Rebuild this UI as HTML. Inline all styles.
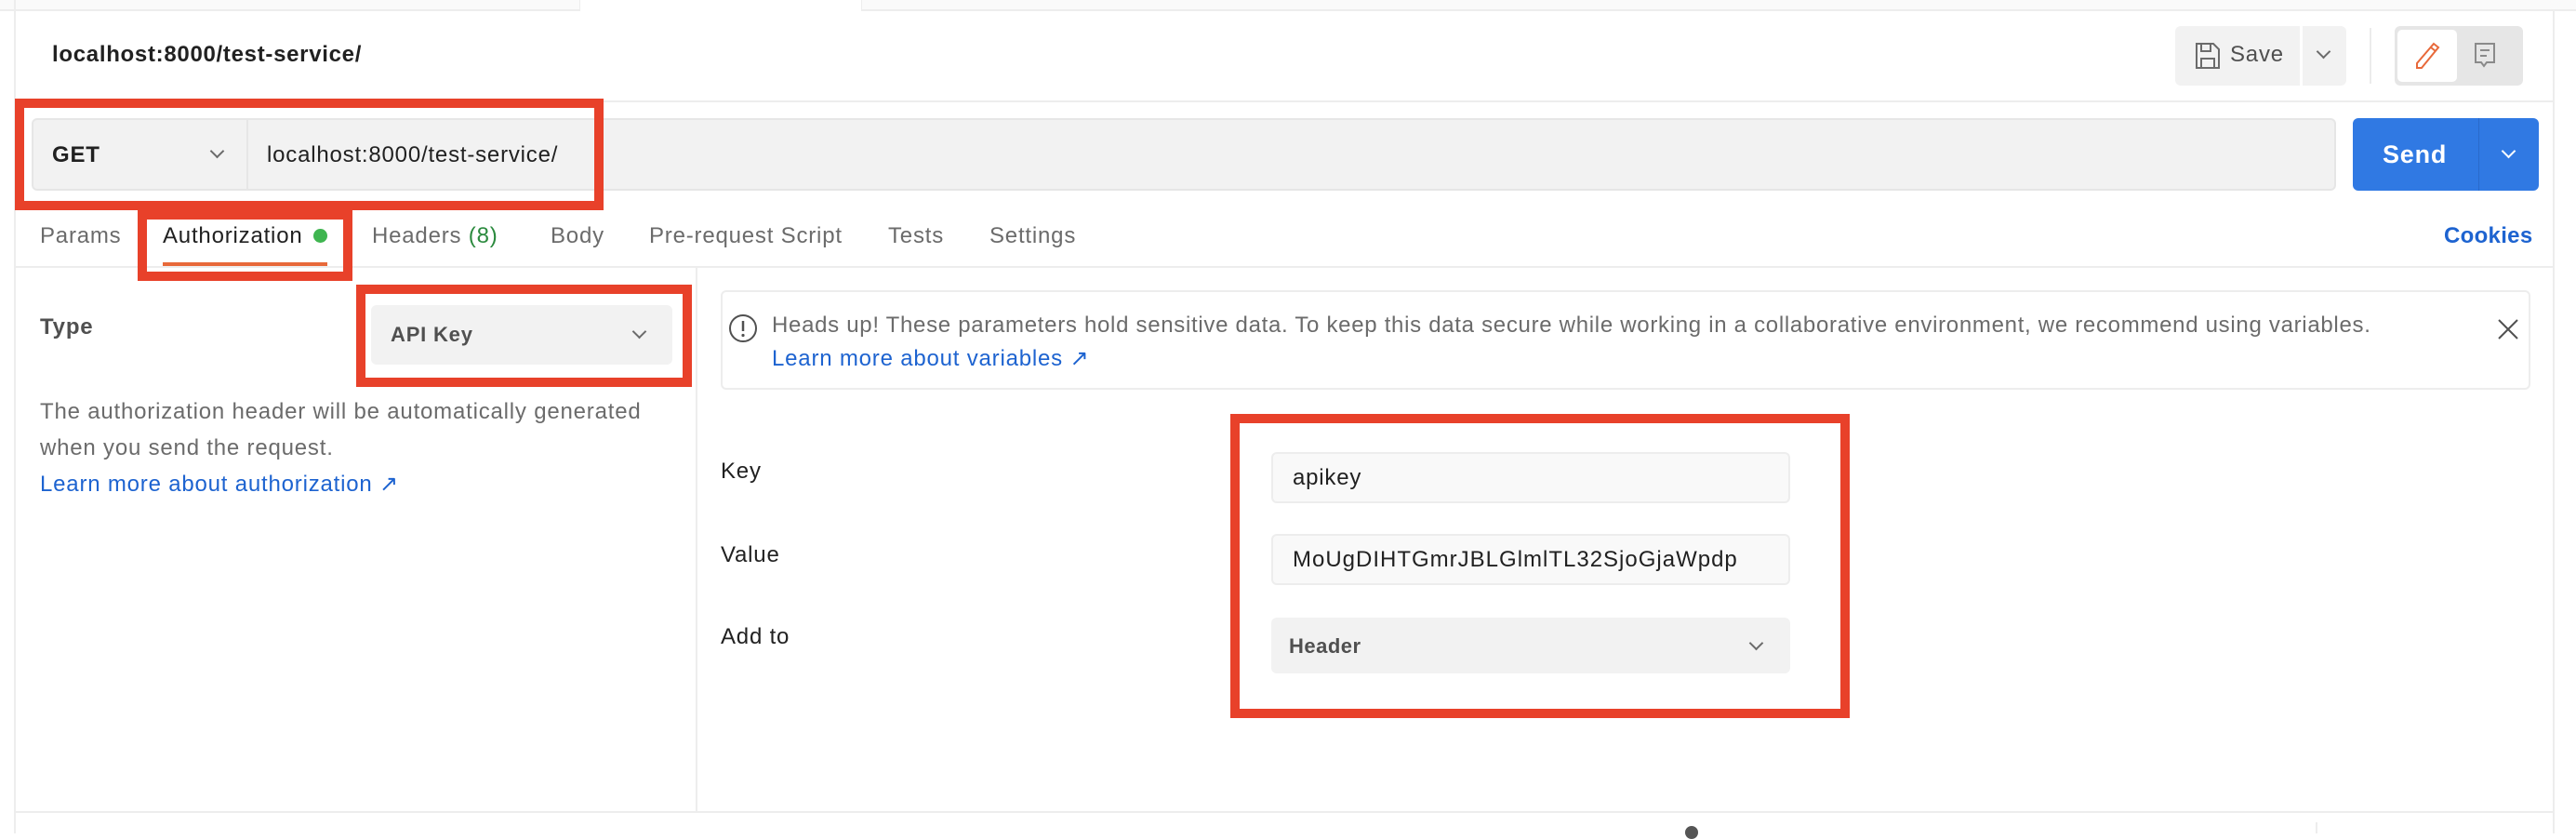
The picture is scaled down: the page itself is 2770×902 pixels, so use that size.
<!DOCTYPE html>
<html><head><meta charset="utf-8"><style>
*{margin:0;padding:0;box-sizing:border-box}
body{width:2770px;height:896px;background:#fff;font-family:"Liberation Sans",sans-serif;position:relative;overflow:hidden;color:#212121}
.a{position:absolute}
.t{position:absolute;white-space:nowrap;font-size:24px;line-height:28px;letter-spacing:0.8px}
.red{position:absolute;border:10px solid #e8412a}
.chev{position:absolute;width:11px;height:11px;border-right:2px solid #6b6b6b;border-bottom:2px solid #6b6b6b;transform:rotate(45deg)}
</style></head><body>
<div class="a" style="left:0;top:0;width:623px;height:12px;background:#fafafa;border-bottom:2px solid #ededed"></div>
<div class="a" style="left:623px;top:0;width:304px;height:12px;background:#fff;border-left:1px solid #ededed;border-right:1px solid #ededed"></div>
<div class="a" style="left:927px;top:0;width:1843px;height:12px;background:#fafafa;border-bottom:2px solid #ededed"></div>
<div class="a" style="left:15px;top:0;width:2px;height:896px;background:#ededed"></div>
<div class="a" style="left:2745px;top:12px;width:2px;height:884px;background:#ededed"></div>
<div class="t" style="left:56px;top:45px;font-weight:bold;color:#212121;letter-spacing:0.7px">localhost:8000/test-service/</div>
<div class="a" style="left:2339px;top:28px;width:134px;height:64px;background:#f2f2f2;border-radius:6px 0 0 6px"></div>
<svg class="a" style="left:2360px;top:45px" width="28" height="30" viewBox="0 0 28 30"><path d="M2 2h18l6 6v20H2z M7 2v8h10V2 M7 28V18h14v10" fill="none" stroke="#6b6b6b" stroke-width="2"/></svg>
<div class="t" style="left:2398px;top:45px;color:#505050">Save</div>
<div class="a" style="left:2476px;top:28px;width:47px;height:64px;background:#f2f2f2;border-radius:0 6px 6px 0"></div>
<div class="chev" style="left:2493px;top:50px"></div>
<div class="a" style="left:2548px;top:30px;width:2px;height:60px;background:#ececec"></div>
<div class="a" style="left:2575px;top:28px;width:138px;height:64px;background:#e6e6e6;border-radius:6px"></div>
<div class="a" style="left:2578px;top:32px;width:64px;height:56px;background:#fff;border-radius:5px"></div>
<svg class="a" style="left:2595px;top:44px" width="30" height="32" viewBox="0 0 30 32"><path d="M22 3l5 4L9 29H4v-5z M19 7l5 4" fill="none" stroke="#e8693a" stroke-width="2"/></svg>
<svg class="a" style="left:2660px;top:45px" width="26" height="30" viewBox="0 0 26 30"><path d="M2 2h20v20H14l-3 4-3-4H2z M7 9h10 M7 15h7" fill="none" stroke="#8a8a8a" stroke-width="2"/></svg>
<div class="a" style="left:17px;top:108px;width:2728px;height:2px;background:#ededed"></div>
<div class="a" style="left:34px;top:127px;width:2478px;height:78px;background:#f2f2f2;border:2px solid #e6e6e6;border-radius:6px"></div>
<div class="a" style="left:265px;top:129px;width:2px;height:74px;background:#e6e6e6"></div>
<div class="t" style="left:56px;top:153px;font-weight:bold;color:#212121">GET</div>
<div class="chev" style="left:228px;top:157px"></div>
<div class="t" style="left:287px;top:153px">localhost:8000/test-service/</div>
<div class="a" style="left:2530px;top:127px;width:200px;height:78px;background:#3079e3;border-radius:6px"></div>
<div class="a" style="left:2665px;top:127px;width:1px;height:78px;background:#2a6acb"></div>
<div class="t" style="left:2562px;top:152px;color:#fff;font-weight:bold;font-size:27px">Send</div>
<div class="chev" style="left:2692px;top:157px;border-color:#fff"></div>
<div class="t" style="left:43px;top:240px;color:#6b6b6b">Params</div>
<div class="t" style="left:175px;top:240px;color:#212121">Authorization</div>
<div class="a" style="left:337px;top:246px;width:15px;height:15px;border-radius:50%;background:#3fb550"></div>
<div class="t" style="left:400px;top:240px;color:#6b6b6b">Headers <span style="color:#2b8a3e">(8)</span></div>
<div class="t" style="left:592px;top:240px;color:#6b6b6b">Body</div>
<div class="t" style="left:698px;top:240px;color:#6b6b6b">Pre-request Script</div>
<div class="t" style="left:955px;top:240px;color:#6b6b6b">Tests</div>
<div class="t" style="left:1064px;top:240px;color:#6b6b6b">Settings</div>
<div class="t" style="left:2628px;top:240px;color:#1d63d0;font-weight:bold;letter-spacing:0.3px">Cookies</div>
<div class="a" style="left:175px;top:282px;width:177px;height:4px;background:#e8693a"></div>
<div class="a" style="left:17px;top:286px;width:2728px;height:2px;background:#ededed"></div>
<div class="a" style="left:748px;top:288px;width:2px;height:585px;background:#ededed"></div>
<div class="t" style="left:43px;top:338px;color:#505050;font-weight:bold">Type</div>
<div class="a" style="left:399px;top:328px;width:324px;height:64px;background:#f2f2f2;border-radius:6px"></div>
<div class="t" style="left:420px;top:346px;color:#505050;font-weight:bold;font-size:22px">API Key</div>
<div class="chev" style="left:682px;top:351px"></div>
<div class="t" style="left:43px;top:429px;color:#6b6b6b">The authorization header will be automatically generated</div>
<div class="t" style="left:43px;top:468px;color:#6b6b6b">when you send the request.</div>
<div class="t" style="left:43px;top:507px;color:#1d63d0">Learn more about authorization ↗</div>
<div class="a" style="left:775px;top:312px;width:1946px;height:107px;border:2px solid #ededed;border-radius:6px"></div>
<svg class="a" style="left:783px;top:337px" width="32" height="32" viewBox="0 0 32 32"><circle cx="16" cy="16" r="14" fill="none" stroke="#505050" stroke-width="2"/><path d="M16 8v11" stroke="#505050" stroke-width="2.5"/><circle cx="16" cy="23.5" r="1.6" fill="#505050"/></svg>
<div class="t" style="left:830px;top:336px;color:#6b6b6b;letter-spacing:0.7px">Heads up! These parameters hold sensitive data. To keep this data secure while working in a collaborative environment, we recommend using variables.</div>
<div class="t" style="left:830px;top:372px;color:#1d63d0">Learn more about variables ↗</div>
<svg class="a" style="left:2685px;top:342px" width="24" height="24" viewBox="0 0 24 24"><path d="M2 2l20 20M22 2L2 22" stroke="#505050" stroke-width="2"/></svg>
<div class="t" style="left:775px;top:493px">Key</div>
<div class="t" style="left:775px;top:583px">Value</div>
<div class="t" style="left:775px;top:671px">Add to</div>
<div class="a" style="left:1367px;top:486px;width:558px;height:55px;background:#f9f9f9;border:2px solid #ededed;border-radius:6px"></div>
<div class="t" style="left:1390px;top:500px">apikey</div>
<div class="a" style="left:1367px;top:574px;width:558px;height:55px;background:#f9f9f9;border:2px solid #ededed;border-radius:6px"></div>
<div class="t" style="left:1390px;top:588px;letter-spacing:1px">MoUgDIHTGmrJBLGlmlTL32SjoGjaWpdp</div>
<div class="a" style="left:1367px;top:664px;width:558px;height:60px;background:#f2f2f2;border-radius:6px"></div>
<div class="t" style="left:1386px;top:681px;color:#505050;font-weight:bold;font-size:22px;letter-spacing:0.5px">Header</div>
<div class="chev" style="left:1883px;top:686px"></div>
<div class="a" style="left:17px;top:872px;width:2728px;height:2px;background:#ededed"></div>
<div class="a" style="left:1812px;top:888px;width:14px;height:14px;border-radius:50%;background:#555"></div>
<div class="a" style="left:2490px;top:884px;width:2px;height:12px;background:#ededed"></div>
<div class="red" style="left:16px;top:106px;width:633px;height:120px"></div>
<div class="red" style="left:148px;top:226px;width:231px;height:76px"></div>
<div class="red" style="left:383px;top:306px;width:361px;height:110px"></div>
<div class="red" style="left:1323px;top:445px;width:666px;height:327px"></div>
</body></html>
